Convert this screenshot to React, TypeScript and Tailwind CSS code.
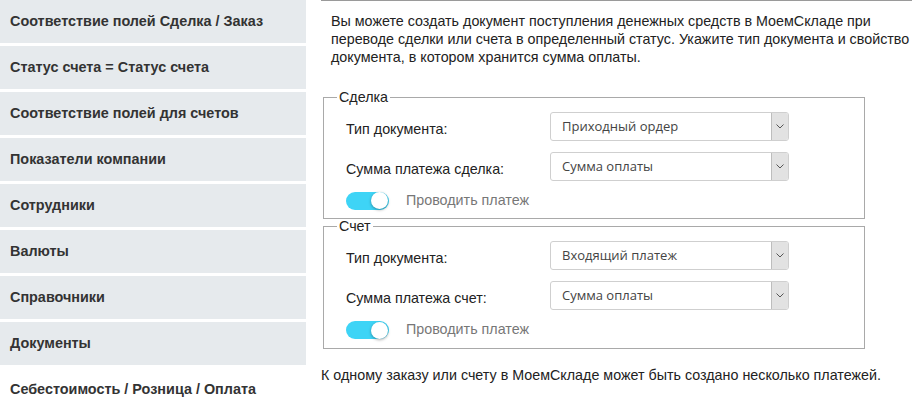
import React from "react";

const menuItems: ReadonlyArray<{ label: string; active?: boolean }> = [
  { label: "Соответствие полей Сделка / Заказ" },
  { label: "Статус счета = Статус счета" },
  { label: "Соответствие полей для счетов" },
  { label: "Показатели компании" },
  { label: "Сотрудники" },
  { label: "Валюты" },
  { label: "Справочники" },
  { label: "Документы" },
  { label: "Себестоимость / Розница / Оплата", active: true },
];

const SelectBox = ({ value }: { value: string }) => (
  <div className="flex h-[29px] w-[239px] items-stretch overflow-hidden rounded-[3px] border border-[#cfcfcf] bg-white">
    <div className="flex flex-1 items-center pl-[11px] font-['Open_Sans',sans-serif] text-[13px] text-[#444]">
      {value}
    </div>
    <div className="flex w-[17px] items-center justify-center border-l border-[#bdbdbd] bg-[#e2e2e2]">
      <svg width="8" height="5" viewBox="0 0 8 5" fill="none">
        <path d="M0.5 0.5 L4 4 L7.5 0.5" stroke="#555" strokeWidth="1" />
      </svg>
    </div>
  </div>
);

const Toggle = () => (
  <div className="relative h-[18px] w-[43px] rounded-full bg-[#3ed4f6]">
    <div className="absolute right-[1px] top-[0.5px] h-[17px] w-[17px] rounded-full bg-white shadow-[0_1px_3px_rgba(0,0,0,0.35)]" />
  </div>
);

interface GroupProps {
  title: string;
  sumLabel: string;
  docType: string;
}

const PaymentGroup: React.FC<GroupProps> = ({ title, sumLabel, docType }) => (
  <fieldset className="ml-[2px] w-[542px] border border-[#a9a9a9] pl-[13px] pb-[7px]">
    <legend className="px-[2px] text-[14.3px] leading-[16px] text-[#222]">{title}</legend>
    <div className="ml-[9px] flex flex-col pt-[7px]">
      <div className="flex items-center">
        <div className="w-[204px] pt-[6px] text-[14.3px] text-[#222]">Тип документа:</div>
        <SelectBox value={docType} />
      </div>
      <div className="mt-[11px] flex items-center">
        <div className="w-[204px] pt-[6px] text-[14.3px] text-[#222]">{sumLabel}</div>
        <SelectBox value="Сумма оплаты" />
      </div>
      <div className="mt-[9px] flex items-center gap-[17px]">
        <Toggle />
        <span className="text-[14.3px] text-[#777]">Проводить платеж</span>
      </div>
    </div>
  </fieldset>
);

export default function App() {
  return (
    <div className="flex h-[413px] w-[912px] overflow-hidden bg-white font-['Liberation_Sans',Arial,sans-serif]">
      <ul className="flex w-[306px] shrink-0 flex-col gap-[3px]">
        {menuItems.map(({ label, active }) => (
          <li
            key={label}
            className={`flex h-[43px] items-center pl-[10px] pt-[1px] text-[14.4px] font-bold text-[#333] ${
              active ? "bg-white" : "bg-[#e6eaed]"
            }`}
          >
            {label}
          </li>
        ))}
      </ul>

      <div className="ml-[15px] flex-1">
        <div className="border-t border-[#9a9a9a] pl-[10px] pt-[11px] text-[14.3px] leading-[18px] text-[#222]">
          Вы можете создать документ поступления денежных средств в МоемСкладе при переводе сделки или
          счета в определенный статус. Укажите тип документа и свойство документа, в котором хранится
          сумма оплаты.
        </div>

        <div className="mt-[23px]">
          <PaymentGroup title="Сделка" sumLabel="Сумма платежа сделка:" docType="Приходный ордер" />
        </div>
        <div className="-mt-[1px]">
          <PaymentGroup title="Счет" sumLabel="Сумма платежа счет:" docType="Входящий платеж" />
        </div>

        <p className="mt-[17px] text-[14.3px] leading-[18px] text-[#222]">
          К одному заказу или счету в МоемСкладе может быть создано несколько платежей.
        </p>
      </div>
    </div>
  );
}
